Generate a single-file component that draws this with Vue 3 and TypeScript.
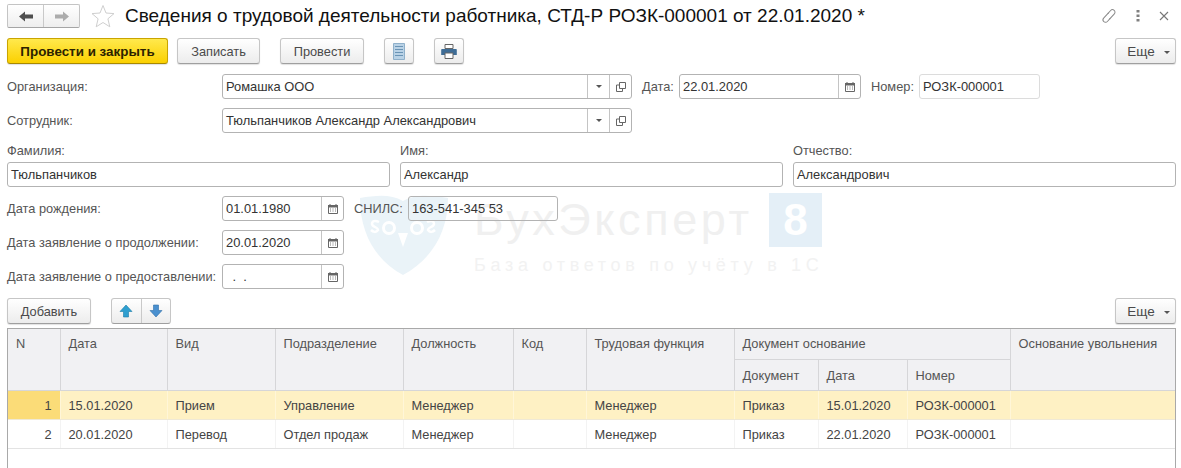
<script setup lang="ts">
interface Row {
  n: number
  date: string
  kind: string
  dept: string
  position: string
  code: string
  func: string
  doc: string
  docDate: string
  docNum: string
  reason: string
}

const rows: Row[] = [
  { n: 1, date: "15.01.2020", kind: "Прием", dept: "Управление", position: "Менеджер", code: "", func: "Менеджер", doc: "Приказ", docDate: "15.01.2020", docNum: "РОЗК-000001", reason: "" },
  { n: 2, date: "20.01.2020", kind: "Перевод", dept: "Отдел продаж", position: "Менеджер", code: "", func: "Менеджер", doc: "Приказ", docDate: "22.01.2020", docNum: "РОЗК-000001", reason: "" },
]

const colWidths = [52, 107, 108, 128, 110, 73, 148, 84, 89, 103, 165]
const selectedRow = 1
</script>

<template>
  <div class="page">
    <svg class="sprite" aria-hidden="true">
      <symbol id="i-cal" viewBox="0 0 12 12">
        <path d="M1.500 2.500h9v8h-9z" fill="#fff" stroke="#666" />
        <path d="M1 2h10v2.500H1z" fill="#666" />
        <path d="M3 1v2M9 1v2" stroke="#666" />
        <path d="M3 6h1M5.500 6h1M8 6h1M3 8h1M5.500 8h1M8 8h1" stroke="#777" />
      </symbol>
      <symbol id="i-open" viewBox="0 0 12 12">
        <path d="M4.500 1.500h6v6h-6z" fill="none" stroke="#666" />
        <path d="M4.500 4h-3v6.500h6V7.500" fill="none" stroke="#666" />
      </symbol>
    </svg>

    <div class="watermark" aria-hidden="true">
      <svg class="wm-shield" width="94" height="84" viewBox="0 0 94 84">
        <path d="M3 5C20 2 34 1 46 8C58 1 72 2 91 5C91 42 72 68 46 82C20 68 3 42 3 5Z" fill="#eaf3f8" />
        <circle cx="32" cy="35" r="5.500" fill="none" stroke="#fff" stroke-width="3" />
        <circle cx="60" cy="35" r="5.500" fill="none" stroke="#fff" stroke-width="3" />
        <path d="M41 40h10l-5 14z" fill="#fff" />
        <path d="M22 29c-4-2-7-1-7 2s6 3 6 6c-2 3-5 2-7 0M70 29c4-2 7-1 7 2s-6 3-6 6c2 3 5 2 7 0" fill="none" stroke="#fff" stroke-width="2.500" />
      </svg>
      <div class="wm-text">
        <div class="wm-top">
          <span class="wm-name">БухЭксперт</span>
          <span class="wm-eight">8</span>
        </div>
        <div class="wm-sub">База ответов по учёту в 1С</div>
      </div>
    </div>

    <header class="titlebar">
      <div class="nav-group">
        <button class="nav-btn">
          <svg width="14" height="11" viewBox="0 0 14 11"><path d="M0 5.500L6 .5v3h8v4H6v3z" fill="#4f4f4f" /></svg>
        </button>
        <button class="nav-btn">
          <svg width="14" height="11" viewBox="0 0 14 11"><path d="M14 5.500L8 .5v3H0v4h8v3z" fill="#acacac" /></svg>
        </button>
      </div>
      <svg class="star" width="24" height="24" viewBox="0 0 24 24">
        <path d="M12 1.500l3 7.500 8 .6-6.100 5.200 1.900 8L12 18.500l-6.800 4.300 1.900-8L1 9.600 9 9z" fill="#fff" stroke="#cfcfcf" />
      </svg>
      <h1 class="title">Сведения о трудовой деятельности работника, СТД-Р РОЗК-000001 от 22.01.2020 *</h1>
      <div class="win-tools">
        <svg width="16" height="16" viewBox="0 0 16 16">
          <g transform="rotate(-48 8 8)" fill="none" stroke="#8a8a8a">
            <path d="M7 10.500H2.800a2.500 2.500 0 0 1 0-5H10" />
            <path d="M9 5.500h4.200a2.500 2.500 0 0 1 0 5H6" />
          </g>
        </svg>
        <svg width="4" height="14" viewBox="0 0 4 14">
          <path d="M.5 1h3v2.500h-3zM.5 5.500h3V8h-3zM.5 10h3v2.500h-3z" fill="#808080" />
        </svg>
        <svg width="10" height="10" viewBox="0 0 10 10">
          <path d="M1 1l8 8M9 1l-8 8" stroke="#777" stroke-width="1.100" />
        </svg>
      </div>
    </header>

    <div class="toolbar">
      <button class="btn btn-primary">Провести и закрыть</button>
      <button class="btn btn-write">Записать</button>
      <button class="btn btn-post">Провести</button>
      <button class="btn btn-icon">
        <svg width="12" height="17" viewBox="0 0 12 17">
          <path d="M.5.5h11v16H.5z" fill="#b9d2e6" stroke="#8fb0ca" />
          <path d="M2 3.500h8M2 6.500h8M2 9.500h8M2 12.500h8" stroke="#6a94b5" />
        </svg>
      </button>
      <button class="btn btn-icon btn-print">
        <svg width="16" height="15" viewBox="0 0 16 15">
          <path d="M4 .5h8v4H4z" fill="#fff" stroke="#666" />
          <path d="M1 5h14a.8.8 0 0 1 .8.8V11H12V9H4v2H.2V5.800A.8.8 0 0 1 1 5z" fill="#3f6d96" />
          <path d="M4 9h8v5.500H4z" fill="#fff" stroke="#666" />
        </svg>
      </button>
      <button class="btn btn-more">Еще<i class="caret"></i></button>
    </div>

    <div class="form-row">
      <label class="label label-wide">Организация:</label>
      <div class="field field-ref">
        <span class="value">Ромашка ООО</span>
        <span class="addon addon-drop"><i class="caret"></i></span>
        <span class="addon addon-open"><svg width="12" height="12"><use href="#i-open" /></svg></span>
      </div>
      <label class="label label-date">Дата:</label>
      <div class="field field-date-top">
        <span class="value">22.01.2020</span>
        <span class="addon addon-cal"><svg width="12" height="12"><use href="#i-cal" /></svg></span>
      </div>
      <label class="label label-num">Номер:</label>
      <div class="field field-num"><span class="value">РОЗК-000001</span></div>
    </div>

    <div class="form-row">
      <label class="label label-wide">Сотрудник:</label>
      <div class="field field-ref">
        <span class="value">Тюльпанчиков Александр Александрович</span>
        <span class="addon addon-drop"><i class="caret"></i></span>
        <span class="addon addon-open"><svg width="12" height="12"><use href="#i-open" /></svg></span>
      </div>
    </div>

    <div class="names">
      <div class="name-col">
        <label class="label">Фамилия:</label>
        <div class="field"><span class="value">Тюльпанчиков</span></div>
      </div>
      <div class="name-col">
        <label class="label">Имя:</label>
        <div class="field"><span class="value">Александр</span></div>
      </div>
      <div class="name-col">
        <label class="label">Отчество:</label>
        <div class="field"><span class="value">Александрович</span></div>
      </div>
    </div>

    <div class="form-row">
      <label class="label label-wide">Дата рождения:</label>
      <div class="field field-date">
        <span class="value">01.01.1980</span>
        <span class="addon addon-cal"><svg width="12" height="12"><use href="#i-cal" /></svg></span>
      </div>
      <label class="label label-snils">СНИЛС:</label>
      <div class="field field-snils"><span class="value">163-541-345 53</span></div>
    </div>

    <div class="form-row">
      <label class="label label-wide">Дата заявление о продолжении:</label>
      <div class="field field-date">
        <span class="value">20.01.2020</span>
        <span class="addon addon-cal"><svg width="12" height="12"><use href="#i-cal" /></svg></span>
      </div>
    </div>

    <div class="form-row">
      <label class="label label-wide">Дата заявление о предоставлении:</label>
      <div class="field field-date">
        <span class="value value-empty">&nbsp;.&nbsp;&nbsp;.</span>
        <span class="addon addon-cal"><svg width="12" height="12"><use href="#i-cal" /></svg></span>
      </div>
    </div>

    <div class="table-bar">
      <button class="btn btn-add">Добавить</button>
      <div class="move-group">
        <button class="move-btn">
          <svg width="14" height="14" viewBox="0 0 14 14"><path d="M7 1l6 6.500H9.500V13h-5V7.500H1z" fill="#2f9fd0" stroke="#1b7ca8" stroke-width=".6" /></svg>
        </button>
        <button class="move-btn">
          <svg width="14" height="14" viewBox="0 0 14 14"><path d="M7 13L1 6.500h3.500V1h5v5.500H13z" fill="#4a90cf" stroke="#2f6fa8" stroke-width=".6" /></svg>
        </button>
      </div>
      <button class="btn btn-more">Еще<i class="caret"></i></button>
    </div>

    <div class="table-wrap">
      <table class="grid">
        <colgroup>
          <col v-for="(w, i) in colWidths" :key="i" :style="{ width: w + 'px' }" />
        </colgroup>
        <thead>
          <tr class="head-top">
            <th rowspan="2">N</th>
            <th rowspan="2">Дата</th>
            <th rowspan="2">Вид</th>
            <th rowspan="2">Подразделение</th>
            <th rowspan="2">Должность</th>
            <th rowspan="2">Код</th>
            <th rowspan="2">Трудовая функция</th>
            <th colspan="3">Документ основание</th>
            <th rowspan="2" class="last">Основание увольнения</th>
          </tr>
          <tr class="head-sub">
            <th>Документ</th>
            <th>Дата</th>
            <th>Номер</th>
          </tr>
        </thead>
        <tbody>
          <tr v-for="row in rows" :key="row.n" :class="{ selected: row.n === selectedRow }">
            <td class="num">{{ row.n }}</td>
            <td>{{ row.date }}</td>
            <td>{{ row.kind }}</td>
            <td>{{ row.dept }}</td>
            <td>{{ row.position }}</td>
            <td>{{ row.code }}</td>
            <td>{{ row.func }}</td>
            <td>{{ row.doc }}</td>
            <td>{{ row.docDate }}</td>
            <td>{{ row.docNum }}</td>
            <td class="last">{{ row.reason }}</td>
          </tr>
        </tbody>
      </table>
    </div>
  </div>
</template>

<style>
html,
body {
  margin: 0;
  background: #fff;
  overflow: hidden;
}
</style>

<style scoped>
.page {
  position: relative;
  box-sizing: border-box;
  width: 1181px;
  height: 468px;
  padding: 4px 5px 0 7px;
  overflow: hidden;
  background: #fff;
  font-family: "Liberation Sans", Arial, sans-serif;
  font-size: 12.800px;
  color: #4a4a4a;
}

.sprite {
  position: absolute;
  width: 0;
  height: 0;
}

/* logo under the form */
.watermark {
  position: absolute;
  left: 357px;
  top: 193px;
  display: flex;
  gap: 23px;
}

.wm-top {
  display: flex;
  align-items: flex-start;
}

.wm-name {
  width: 295px;
  font-size: 45px;
  line-height: 54px;
  letter-spacing: 3.600px;
  color: #f0f0f0;
}

.wm-eight {
  width: 53px;
  height: 54px;
  background: #e4eff7;
  color: #fff;
  font-size: 44px;
  font-weight: 700;
  line-height: 54px;
  text-align: center;
}

.wm-sub {
  margin-top: 8px;
  font-size: 18px;
  line-height: 20px;
  letter-spacing: 4.700px;
  color: #f2f2f2;
  white-space: nowrap;
}

.titlebar {
  position: relative;
  display: flex;
  align-items: center;
  height: 24px;
}

.nav-group {
  display: flex;
  width: 73px;
  height: 24px;
  box-sizing: border-box;
  border: 1px solid #c4c4c4;
  border-bottom-color: #a5a5a5;
  border-radius: 2px;
  background: linear-gradient(#fff, #eee);
}

.nav-btn,
.move-btn {
  flex: 1;
  display: flex;
  align-items: center;
  justify-content: center;
  padding: 0;
  border: 0;
  background: transparent;
}

.nav-btn + .nav-btn,
.move-btn + .move-btn {
  border-left: 1px solid #c9c9c9;
}

.star {
  margin-left: 11px;
}

.title {
  margin: 0 0 0 10px;
  font-size: 19px;
  font-weight: 400;
  line-height: 24px;
  color: #111;
  white-space: nowrap;
}

.win-tools {
  display: flex;
  align-items: center;
  gap: 19px;
  margin-left: auto;
  padding-right: 7px;
}

.toolbar {
  position: relative;
  display: flex;
  align-items: stretch;
  height: 26px;
  margin-top: 10px;
}

.btn {
  box-sizing: border-box;
  height: 26px;
  padding: 1px 0 0;
  border: 1px solid #c6c6c6;
  border-bottom-color: #9f9f9f;
  border-radius: 3px;
  background: linear-gradient(#fff, #ececec);
  box-shadow: 0 1px 1px rgba(0, 0, 0, 0.12);
  font: inherit;
  color: #4a4a4a;
}

.btn-primary {
  width: 161px;
  border-color: #c9a400;
  border-bottom-color: #a88900;
  background: linear-gradient(#ffe94d, #fbd000);
  color: #2b2200;
  font-size: 13.400px;
  font-weight: 700;
}

.btn-write {
  width: 83px;
  margin-left: 9px;
}

.btn-post {
  width: 84px;
  margin-left: 20px;
}

.btn-icon {
  display: flex;
  align-items: center;
  justify-content: center;
  width: 30px;
  margin-left: 20px;
  padding: 0;
}

.btn-more {
  width: 61px;
  margin-left: auto;
  padding-left: 6px;
  font-size: 13.500px;
}

.caret {
  display: inline-block;
  margin-left: 9px;
  border: 3px solid transparent;
  border-top: 3px solid #555;
  border-bottom: 0;
  vertical-align: middle;
}

.form-row {
  position: relative;
  display: flex;
  align-items: center;
  height: 25px;
  margin-top: 9px;
}

.toolbar + .form-row {
  margin-top: 10px;
}

.label {
  color: #555;
  white-space: nowrap;
}

.label-wide {
  width: 215px;
  flex: none;
}

.label-date {
  width: 37px;
  margin-left: 10px;
}

.label-num {
  width: 48px;
  margin-left: 10px;
}

.label-snils {
  width: 54px;
  margin-left: 10px;
}

.field {
  display: flex;
  align-items: stretch;
  box-sizing: border-box;
  height: 25px;
  flex: none;
  border: 1px solid #b3b3b3;
  border-radius: 3px;
  color: #333;
}

.value {
  flex: 1;
  padding-left: 3px;
  font-size: 12.900px;
  line-height: 24px;
  white-space: nowrap;
  overflow: hidden;
}

.value-empty {
  padding-left: 6px;
}

.addon {
  display: flex;
  align-items: center;
  justify-content: center;
  width: 21px;
  border-left: 1px solid #c4c4c4;
}

.addon .caret {
  margin-left: 0;
}

.field-ref {
  width: 410px;
}

.field-date-top {
  width: 182px;
}

.field-date {
  width: 122px;
}

.field-num {
  width: 121px;
  border-color: #dcdcdc;
}

.field-snils {
  width: 150px;
}

.names {
  position: relative;
  display: grid;
  grid-template-columns: repeat(3, 383px);
  gap: 10px;
  margin-top: 9px;
}

.name-col {
  display: flex;
  flex-direction: column;
  gap: 3px;
}

.name-col .label {
  padding-top: 1px;
  line-height: 16px;
}

.name-col .field {
  width: 100%;
}

.table-bar {
  position: relative;
  display: flex;
  align-items: stretch;
  height: 26px;
  margin-top: 9px;
}

.btn-add {
  width: 84px;
}

.move-group {
  display: flex;
  box-sizing: border-box;
  width: 60px;
  margin-left: 20px;
  border: 1px solid #c6c6c6;
  border-bottom-color: #9f9f9f;
  border-radius: 3px;
  background: linear-gradient(#fff, #ececec);
}

.table-wrap {
  position: relative;
  box-sizing: border-box;
  width: 1169px;
  height: 140px;
  margin-top: 4px;
  border: 1px solid #a9a9a9;
  border-bottom: 0;
}

.grid {
  width: 100%;
  table-layout: fixed;
  border-collapse: collapse;
}

.grid th {
  box-sizing: border-box;
  padding: 0 8px;
  background: #f1f1f3;
  border-right: 1px solid #d6d6d8;
  border-bottom: 1px solid #d6d6d8;
  font-weight: 400;
  text-align: left;
  vertical-align: top;
  color: #555;
  white-space: nowrap;
}

.head-top {
  height: 30px;
}

.head-top th {
  padding-top: 7px;
}

.head-sub {
  height: 31px;
}

.head-sub th {
  padding-top: 8px;
}

.grid td {
  box-sizing: border-box;
  height: 29px;
  padding: 2px 8px 0;
  border-right: 1px solid #f3f3f3;
  border-bottom: 1px solid #e3e3e3;
  color: #444;
  white-space: nowrap;
}

.grid .last {
  border-right: 0;
}

.grid .num {
  text-align: right;
}

.selected td {
  background: #fef1c4;
  border-right-color: #fff6d8;
  border-bottom-color: #efe9d6;
}

.selected .num {
  background: #fbdc78;
}
</style>
